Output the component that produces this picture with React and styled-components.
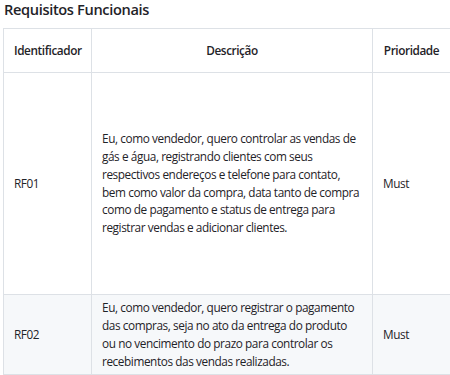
import styled, { createGlobalStyle } from 'styled-components'

const GlobalStyle = createGlobalStyle`
    html, body {
        margin: 0;
        padding: 0;
        background: #ffffff;
        overflow: hidden;
    }
    body {
        font-family: "Open Sans", "Noto Sans", sans-serif;
        color: #1f2328;
    }
`

const requirements = [
    {
        id: 'RF01',
        description: 'Eu, como vendedor, quero controlar as vendas de gás e água, registrando clientes com seus respectivos endereços e telefone para contato, bem como valor da compra, data tanto de compra como de pagamento e status de entrega para registrar vendas e adicionar clientes.',
        priority: 'Must',
        height: 222,
    },
    {
        id: 'RF02',
        description: 'Eu, como vendedor, quero registrar o pagamento das compras, seja no ato da entrega do produto ou no vencimento do prazo para controlar os recebimentos das vendas realizadas.',
        priority: 'Must',
        height: 80,
    },
]


function App() {
    return (
        <Page>
            <GlobalStyle />
            <Title>Requisitos Funcionais</Title>
            <Table>
                <colgroup>
                    <col style={{ width: 88 }} />
                    <col style={{ width: 281 }} />
                    <col style={{ width: 78 }} />
                </colgroup>
                <thead>
                    <HeadRow>
                        <HeadCell>Identificador</HeadCell>
                        <HeadCell>Descrição</HeadCell>
                        <HeadCell>Prioridade</HeadCell>
                    </HeadRow>
                </thead>
                <tbody>
                    {requirements.map((req, index) => (
                        <BodyRow key={req.id} $striped={index % 2 === 1} $height={req.height}>
                            <Cell>{req.id}</Cell>
                            <Cell>{req.description}</Cell>
                            <Cell>{req.priority}</Cell>
                        </BodyRow>
                    ))}
                </tbody>
            </Table>
        </Page>
    )
}

const Page = styled.div`
    width: 450px;
    height: 375px;
    overflow: hidden;
    padding-left: 3px;
    box-sizing: border-box;
`

const Title = styled.h2`
    margin: 0;
    padding-left: 1px;
    font-size: 14.6px;
    line-height: 19px;
    font-weight: 600;
    letter-spacing: -0.35px;
    color: #1f2328;
`

const Table = styled.table`
    margin-top: 9px;
    width: 448px;
    border-collapse: collapse;
    border-spacing: 0;
    table-layout: fixed;
    font-size: 11.8px;
    line-height: 17.85px;
    letter-spacing: -0.42px;
`

const HeadRow = styled.tr`
    height: 44px;
`

const HeadCell = styled.th`
    border: 1px solid #dde1e6;
    padding: 5px 10px;
    font-weight: 600;
    text-align: center;
    white-space: nowrap;
`

const BodyRow = styled.tr`
    height: ${props => props.$height}px;
    background: ${props => props.$striped ? '#f6f8fa' : '#ffffff'};
`

const Cell = styled.td`
    border: 1px solid #dde1e6;
    padding: 4px 10px;
    vertical-align: middle;
    text-align: left;
`

export default App
